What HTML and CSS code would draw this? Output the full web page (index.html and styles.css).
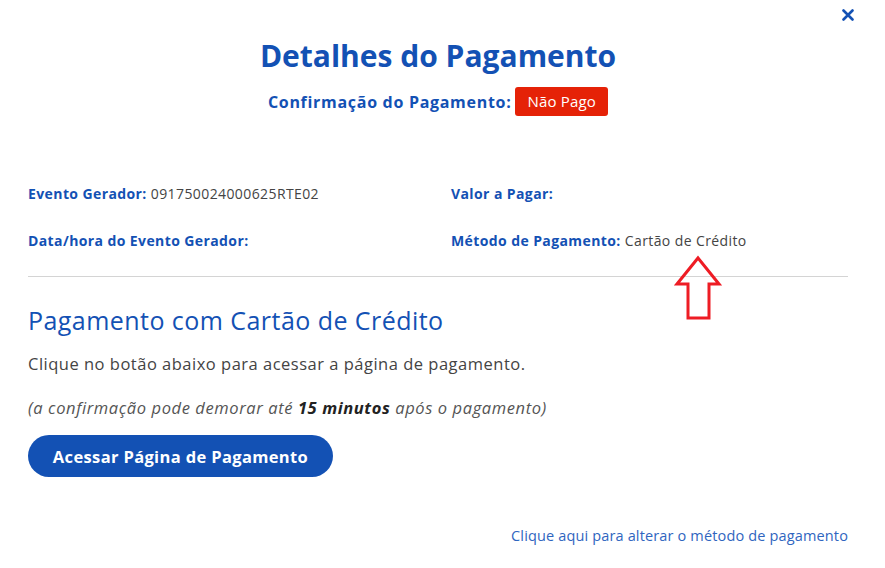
FILE: index.html
```html
<!DOCTYPE html>
<html lang="pt-BR">
<head>
<meta charset="utf-8">
<title>Detalhes do Pagamento</title>
<link rel="stylesheet" href="styles.css">
</head>
<body>
<div class="modal">
  <button class="close" aria-label="Fechar">
    <svg width="12" height="12" viewBox="0 0 12 12"><path d="M1.5 1.5 L10.5 10.5 M10.5 1.5 L1.5 10.5" stroke="#1351b4" stroke-width="2.6" stroke-linecap="round"/></svg>
  </button>
  <h1 class="title">Detalhes do Pagamento</h1>
  <div class="status">
    <span class="status-label">Confirmação do Pagamento:</span>
    <span class="badge">Não Pago</span>
  </div>
  <div class="info">
    <div class="info-item"><span class="lbl">Evento Gerador:</span> 091750024000625RTE02</div>
    <div class="info-item"><span class="lbl">Valor a Pagar:</span></div>
    <div class="info-item"><span class="lbl">Data/hora do Evento Gerador:</span></div>
    <div class="info-item"><span class="lbl">Método de Pagamento:</span> Cartão de Crédito</div>
  </div>
  <hr class="sep">
  <h2 class="sub">Pagamento com Cartão de Crédito</h2>
  <p class="txt">Clique no botão abaixo para acessar a página de pagamento.</p>
  <p class="txt note">(a confirmação pode demorar até <b>15 minutos</b> após o pagamento)</p>
  <button class="btn">Acessar Página de Pagamento</button>
  <div class="footer"><a class="link" href="#">Clique aqui para alterar o método de pagamento</a></div>
  <svg class="arrow" width="50" height="66" viewBox="0 0 50 66"><path d="M24 3 L45 29 L35 29 L35 63 L14 63 L14 29 L3 29 Z" fill="none" stroke="#ee1c24" stroke-width="3" stroke-linejoin="miter"/></svg>
</div>
</body>
</html>
```
FILE: styles.css
```css
* { box-sizing: border-box; }
html, body { margin: 0; padding: 0; background: #fff; }
body { font-family: "Open Sans", "Liberation Sans", sans-serif; color: #333; }
.modal { position: relative; width: 885px; height: 568px; padding: 0 37px 0 28px; }
.close { position: absolute; top: 9px; right: 31px; border: 0; background: none; padding: 0; width: 12px; height: 12px; }
.close svg { display: block; }
.title { margin: 0; padding-top: 36px; text-align: center; font-size: 30px; font-weight: 700; color: #1351b4; line-height: 40px; letter-spacing: 0; }
.status { display: flex; justify-content: center; align-items: center; gap: 4px; margin-top: 11px; }
.status-label { font-size: 16px; font-weight: 700; color: #1351b4; letter-spacing: 0.7px; }
.badge { background: #e52207; color: #fff; font-size: 15px; border-radius: 3px; padding: 0 12px; height: 29px; line-height: 29px; letter-spacing: 0.2px; }
.info { display: grid; grid-template-columns: 423px 1fr; row-gap: 26px; margin-top: 67px; font-size: 14px; color: #444; line-height: 21px; letter-spacing: 0.4px; }
.lbl { font-weight: 700; color: #1351b4; }
.sep { border: 0; border-top: 1px solid #d4d4d4; margin: 25px 0 0; }
.sub { margin: 25px 0 0; font-size: 25px; font-weight: 400; color: #1351b4; line-height: 36px; letter-spacing: 0.45px; }
.txt { margin: 14px 0 0; font-size: 16.5px; color: #444; line-height: 24px; letter-spacing: 0.5px; }
.note { font-style: italic; margin-top: 20px; color: #555; letter-spacing: 0.6px; }
.note b { color: #222; }
.btn { display: block; margin-top: 15px; background: #1351b4; color: #fff; border: 0; border-radius: 21px; height: 42px; width: 305px; font-family: inherit; font-size: 16.5px; font-weight: 700; letter-spacing: 0.35px; }
.footer { display: flex; justify-content: flex-end; margin-top: 49px; }
.link { color: #2f65c0; text-decoration: none; font-size: 14.5px; letter-spacing: 0.15px; }
.arrow { position: absolute; left: 674px; top: 255px; }
```
